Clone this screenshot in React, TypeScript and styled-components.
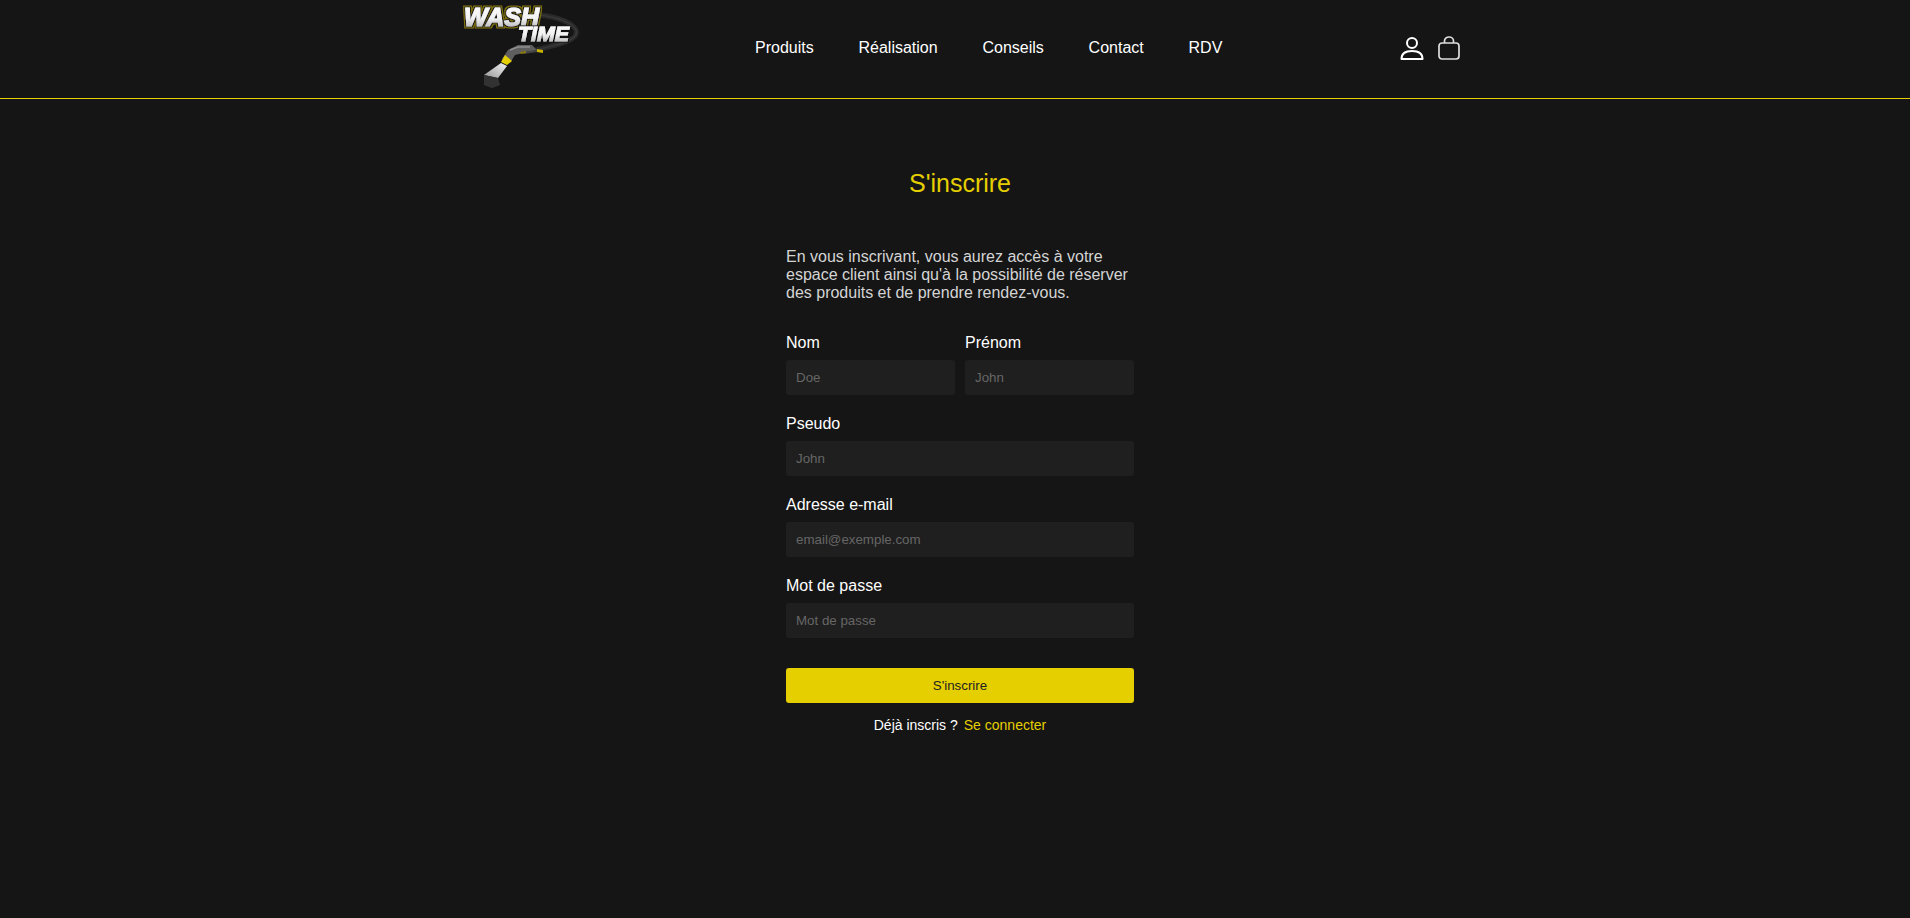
import React from "react";
import styled, { createGlobalStyle } from "styled-components";

const Global = createGlobalStyle`
  html, body { margin: 0; padding: 0; background: #151515; overflow-x: hidden; }
  body { font-family: "Liberation Sans", Arial, sans-serif; color: #fff; }
  * { box-sizing: border-box; }
`;

const Page = styled.div`
  width: 1920px;
  min-height: 918px;
  background: #151515;
`;

const Header = styled.header`
  height: 99px;
  border-bottom: 1px solid #e5cf00;
`;

const HeaderInner = styled.div`
  width: 1000px;
  height: 98px;
  margin: 0 auto;
  display: flex;
  align-items: flex-start;
`;

const LogoWrap = styled.a`
  display: block;
  width: 295px;
  flex: none;
`;

const Nav = styled.nav`
  display: flex;
  gap: 44.8px;
  height: 95px;
  align-items: center;
  font-size: 16px;
`;

const NavLink = styled.a`
  color: #fff;
  line-height: 18px;
`;

const Icons = styled.div`
  margin-left: auto;
  display: flex;
  align-items: center;
  height: 96px;
  gap: 14px;
`;

const Main = styled.main`
  width: 348px;
  margin: 0 auto;
  padding-top: 67px;
`;

const Title = styled.h1`
  margin: 0 0 48px;
  font-size: 25px;
  font-weight: 400;
  line-height: 34px;
  color: #e5cf00;
  text-align: center;
`;

const Intro = styled.p`
  margin: 0 0 32px;
  font-size: 16px;
  line-height: 18px;
  color: #d4d4d4;
`;

const Form = styled.form`
  display: flex;
  flex-direction: column;
  gap: 20px;
`;

const Row = styled.div`
  display: grid;
  grid-template-columns: 1fr 1fr;
  gap: 10px;
`;

const Field = styled.div`
  display: flex;
  flex-direction: column;
  gap: 8px;
`;

const Label = styled.label`
  font-size: 16px;
  line-height: 18px;
  color: #fff;
`;

const Input = styled.input`
  width: 100%;
  height: 35px;
  padding: 0 10px;
  border: 0;
  border-radius: 3px;
  background: #1f1f1f;
  color: #fff;
  font-family: "Liberation Sans", Arial, sans-serif;
  font-size: 13.33px;
  &::placeholder { color: #666; opacity: 1; }
`;

const Submit = styled.button`
  height: 35px;
  margin-top: 10px;
  border: 0;
  border-radius: 3px;
  background: #e5cf00;
  color: #222;
  font-family: "Liberation Sans", Arial, sans-serif;
  font-size: 13.33px;
`;

const Footer = styled.p`
  margin: 13px 0 0;
  display: flex;
  justify-content: center;
  gap: 6px;
  font-size: 14px;
  line-height: 18px;
  color: #fff;
`;

const FooterLink = styled.a`
  color: #e5cf00;
`;

const Logo = () => (
  <svg width="125" height="92" viewBox="0 0 125 92" style={{ display: "block" }}>
    <defs>
      <linearGradient id="face" x1="0" y1="0" x2="0" y2="1">
        <stop offset="0" stopColor="#ffffff" />
        <stop offset="0.55" stopColor="#f2f2f2" />
        <stop offset="1" stopColor="#a8a8a8" />
      </linearGradient>
      <linearGradient id="tip" x1="1" y1="0" x2="0" y2="1">
        <stop offset="0" stopColor="#f0f0f0" />
        <stop offset="1" stopColor="#9a9a9a" />
      </linearGradient>
      <filter id="wash" x="-10%" y="-20%" width="120%" height="140%">
        <feMorphology in="SourceAlpha" operator="dilate" radius="1.8" result="out" />
        <feFlood floodColor="#7f7210" />
        <feComposite in2="out" operator="in" result="olive" />
        <feMorphology in="SourceAlpha" operator="dilate" radius="0.9" result="mid" />
        <feFlood floodColor="#1a1a1a" />
        <feComposite in2="mid" operator="in" result="dark" />
        <feMerge>
          <feMergeNode in="olive" />
          <feMergeNode in="dark" />
          <feMergeNode in="SourceGraphic" />
        </feMerge>
      </filter>
      <filter id="time" x="-10%" y="-20%" width="120%" height="140%">
        <feMorphology in="SourceAlpha" operator="dilate" radius="1.2" result="out" />
        <feFlood floodColor="#111" />
        <feComposite in2="out" operator="in" result="dark" />
        <feMerge>
          <feMergeNode in="dark" />
          <feMergeNode in="SourceGraphic" />
        </feMerge>
      </filter>
      <filter id="soft" x="-20%" y="-20%" width="140%" height="140%"><feGaussianBlur stdDeviation="0.6" /></filter>
    </defs>
    <g filter="url(#soft)">
      <path d="M80 15 C96 17 112 22 116 30 C119 37 108 42 96 45 L76 50" fill="none" stroke="#2a2a2a" strokeWidth="5" />
      <path d="M80 15 C96 17 112 22 116 30 C119 37 108 42 96 45 L76 50" fill="none" stroke="#3c3c3c" strokeWidth="1.2" />
      <path d="M42 59 L48 50 L58 45 L72 45 L77 50 L63 53 L55 55 L50 63 Z" fill="#5e5e5e" />
      <path d="M50 50 L58 47 L70 47" fill="none" stroke="#8f8f8f" strokeWidth="1.5" />
      <path d="M77 50 L83 50 L83 52 L77 52 L64 54 L62 52 Z" fill="#444" />
      <path d="M77 49 L83 50 L83 53 L77 52 Z" fill="#c9b400" />
      <path d="M60 52 L66 51 L66 53 L61 54 Z" fill="#8a7c10" />
      <path d="M45 55 L52 61 L47 65 L41 62 Z" fill="#e5cf00" />
      <path d="M41 63 L47 66 L38 78 L24 75 Z" fill="url(#tip)" />
      <path d="M24 75 L38 78 L40 85 L32 88 L24 85 Z" fill="#333" />
    </g>
    <text x="4" y="26" fontFamily="Liberation Sans" fontStyle="italic" fontWeight="700" fontSize="25" fill="url(#face)" stroke="url(#face)" strokeWidth="1.2" filter="url(#wash)" textLength="75" lengthAdjust="spacingAndGlyphs">WASH</text>
    <text x="58" y="41" fontFamily="Liberation Sans" fontStyle="italic" fontWeight="700" fontSize="21" fill="url(#face)" stroke="url(#face)" strokeWidth="1" filter="url(#time)" textLength="51" lengthAdjust="spacingAndGlyphs">TIME</text>
  </svg>
);

const UserIcon = () => (
  <svg width="24" height="24" viewBox="0 0 24 24" fill="none" stroke="#fff" strokeWidth="2">
    <circle cx="12" cy="7" r="5" />
    <path d="M1.5 23 C1.5 18 5 15 12 15 C19 15 22.5 18 22.5 23 Z" strokeLinejoin="round" />
  </svg>
);

const BagIcon = () => (
  <svg width="22" height="24" viewBox="0 0 22 24" fill="none" stroke="#ddd" strokeWidth="1.7">
    <rect x="1" y="7" width="20" height="16" rx="3" />
    <path d="M6.5 7 V5 a4.5 4 0 0 1 9 0 V7" />
  </svg>
);

const Text = ({ id, label, placeholder, type = "text" }: { id: string; label: string; placeholder: string; type?: string }) => (
  <Field>
    <Label htmlFor={id}>{label}</Label>
    <Input id={id} type={type} placeholder={placeholder} />
  </Field>
);

export default function App() {
  return (
    <Page>
      <Global />
      <Header>
        <HeaderInner>
          <LogoWrap><Logo /></LogoWrap>
          <Nav>
            {["Produits", "Réalisation", "Conseils", "Contact", "RDV"].map((n) => (
              <NavLink key={n}>{n}</NavLink>
            ))}
          </Nav>
          <Icons>
            <UserIcon />
            <BagIcon />
          </Icons>
        </HeaderInner>
      </Header>
      <Main>
        <Title>S'inscrire</Title>
        <Intro>
          En vous inscrivant, vous aurez accès à votre espace client ainsi qu'à la possibilité de réserver des produits et de prendre rendez-vous.
        </Intro>
        <Form>
          <Row>
            <Text id="nom" label="Nom" placeholder="Doe" />
            <Text id="prenom" label="Prénom" placeholder="John" />
          </Row>
          <Text id="pseudo" label="Pseudo" placeholder="John" />
          <Text id="email" label="Adresse e-mail" placeholder="email@exemple.com" />
          <Text id="pass" label="Mot de passe" placeholder="Mot de passe" />
          <Submit type="button">S'inscrire</Submit>
        </Form>
        <Footer>
          <span>Déjà inscris ?</span>
          <FooterLink>Se connecter</FooterLink>
        </Footer>
      </Main>
    </Page>
  );
}
